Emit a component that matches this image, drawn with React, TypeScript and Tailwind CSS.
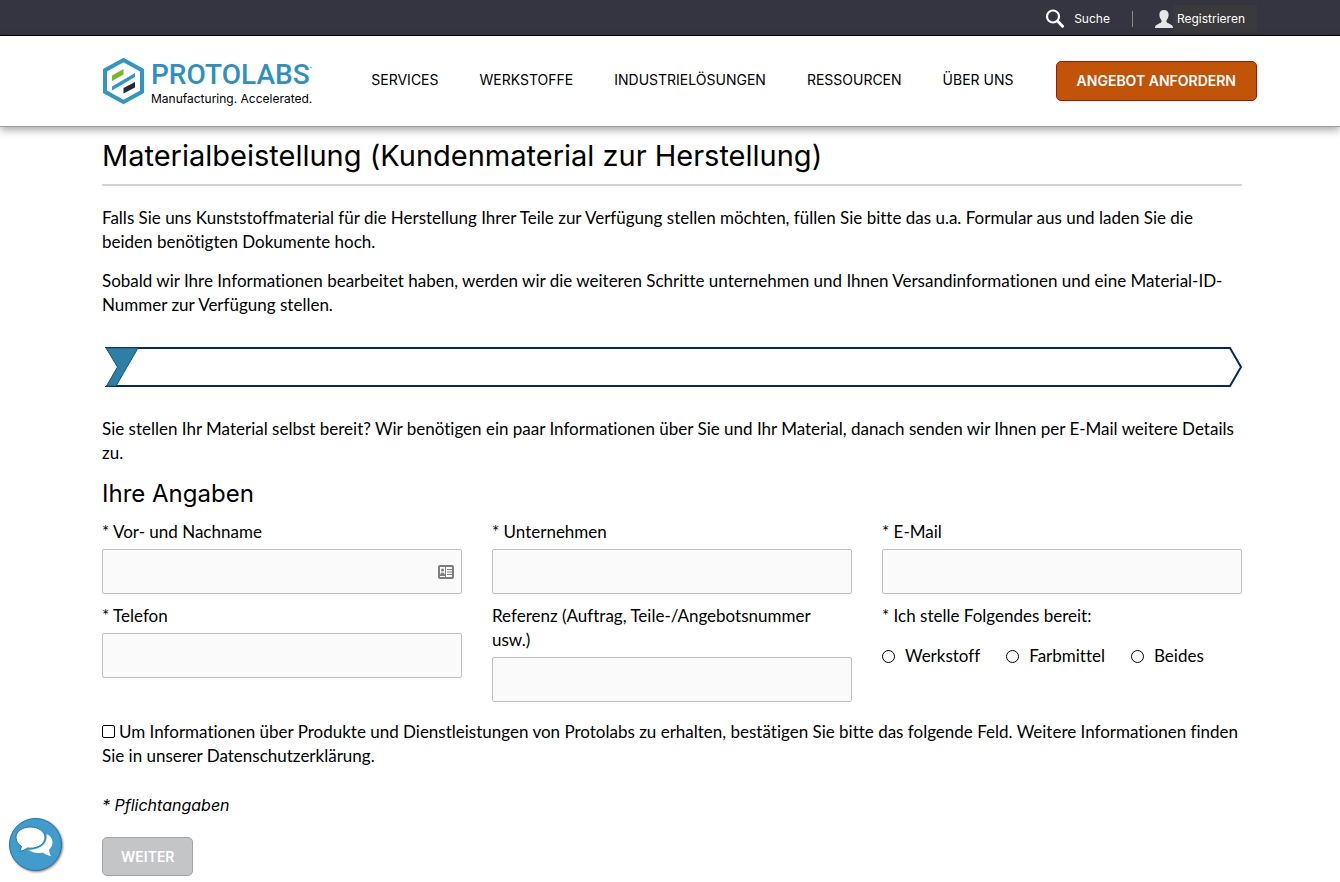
import React, { ReactNode } from 'react'

const navigation = [
  'Services',
  'Werkstoffe',
  'Industrielösungen',
  'Ressourcen',
  'Über uns',
]

const materials = ['Werkstoff', 'Farbmittel', 'Beides']

export default function App() {
  return (
    <div className="min-h-[882px] bg-white font-['Inter','Liberation_Sans',sans-serif] text-base text-black">
      <TopBar />
      <Header />
      <main className="pl-1 font-['Lato',sans-serif] text-[17px] leading-6 [font-variant-ligatures:none]">
        <div className="mx-auto max-w-[1140px] pb-1">
          <h1 className="border-b-2 border-[#d0d3d0] pt-2 pb-[7px] font-['Inter',sans-serif] text-[29px] leading-[42px]">
            Materialbeistellung (Kundenmaterial zur Herstellung)
          </h1>
          <p className="mt-5">
            Falls Sie uns Kunststoffmaterial für die Herstellung Ihrer Teile zur
            Verfügung stellen möchten, füllen Sie bitte das u.a. Formular aus
            und laden Sie die beiden benötigten Dokumente hoch.
          </p>
          <p className="mt-[15px]">
            Sobald wir Ihre Informationen bearbeitet haben, werden wir die
            weiteren Schritte unternehmen und Ihnen Versandinformationen und
            eine Material-ID-Nummer zur Verfügung stellen.
          </p>
          <Progress />
          <p>
            Sie stellen Ihr Material selbst bereit? Wir benötigen ein paar
            Informationen über Sie und Ihr Material, danach senden wir Ihnen per
            E-Mail weitere Details zu.
          </p>
          <MaterialForm />
        </div>
      </main>
      <button
        type="button"
        aria-label="Chat"
        className="fixed bottom-2.5 left-2 cursor-pointer"
      >
        <ChatIcon />
      </button>
    </div>
  )
}

function TopBar() {
  return (
    <div className="h-9 border-b border-black bg-[#343541] pl-1 text-xs text-white">
      <div className="mx-auto flex h-full max-w-[1170px] items-center justify-end pt-0.5">
        <a href="#suche" className="flex items-center gap-2.5">
          <SearchIcon />
          Suche
        </a>
        <span className="mx-[22px] h-4 w-px bg-[#8b8880]" />
        <a href="#registrieren" className="flex items-center">
          <UserIcon />
          <span className="bg-[#3a3a3c] py-1.5 pr-3 pl-1">Registrieren</span>
        </a>
      </div>
    </div>
  )
}

function Header() {
  return (
    <header className="relative h-[91px] border-b border-[#9a9d9d] bg-white pl-1 shadow-[0_3px_8px_rgba(0,0,0,0.35)]">
      <div className="mx-auto flex h-full max-w-[1170px] items-center pl-[15px]">
        <Logo />
        <nav className="ml-[59px] flex gap-[41px] pb-0.5 text-sm uppercase">
          {navigation.map((item) => (
            <a key={item} href="#" className="whitespace-nowrap">
              {item}
            </a>
          ))}
        </nav>
        <a
          href="#angebot"
          className="ml-auto flex h-10 items-center rounded-[5px] border border-[#a31408] bg-[#c2540a] px-5 text-sm font-semibold whitespace-nowrap text-white uppercase"
        >
          Angebot anfordern
        </a>
      </div>
    </header>
  )
}

function Logo() {
  return (
    <a href="#" className="flex items-center gap-1.5">
      <svg width="43" height="48" viewBox="0 0 43 48" aria-hidden="true">
        <path
          d="M21.500 3 40 13.200v21.600L21.500 45 3 34.800V13.200z"
          fill="none"
          stroke="#2e96c8"
          strokeWidth="4"
        />
        <path d="M10 18.500 21.500 12v5.500L10 24z" fill="#76b82a" />
        <path d="M10 29.500 33 16v4L10 33.500z" fill="#2e96c8" />
        <path d="M21.500 31 33 25v5.500L21.500 36.500z" fill="#252a36" />
      </svg>
      <span className="block pt-1">
        <span className="flex font-['Roboto',sans-serif] text-[28px] leading-8 font-medium text-[#2e8fc4]">
          PROTOLABS
          <span className="pt-1 text-[4px] leading-3">™</span>
        </span>
        <span className="block text-xs leading-4">
          Manufacturing. Accelerated.
        </span>
      </span>
    </a>
  )
}

function Progress() {
  return (
    <div
      role="progressbar"
      aria-label="Fortschritt"
      aria-valuenow={0}
      className="my-[30px] flex h-10 pl-[3px]"
    >
      <svg width="36" height="40" viewBox="0 0 36 40">
        <path d="M0 .5h36M0 39.500h36" stroke="#012a62" />
        <path d="M33 1.500h3M11 38.500h25" stroke="#012a62" />
        <path
          d="M1 1h32L11 39H1.500L12.500 20z"
          fill="#2e7fa6"
          stroke="#125387"
          strokeWidth="1"
        />
      </svg>
      <div className="flex-1 border-y-2 border-[#012a62]" />
      <svg width="13" height="40" viewBox="0 0 13 40">
        <path
          d="M0 1h1l11 19L1 39H0"
          fill="none"
          stroke="#012a62"
          strokeWidth="2"
        />
      </svg>
    </div>
  )
}

function MaterialForm() {
  return (
    <form onSubmit={(e) => e.preventDefault()}>
      <h2 className="mt-[11px] mb-2 font-['Inter',sans-serif] text-2xl leading-9">
        Ihre Angaben
      </h2>
      <div className="grid grid-cols-3 gap-x-[30px] gap-y-2.5">
        <Field id="name" label="* Vor- und Nachname">
          <ContactCardIcon />
        </Field>
        <Field id="company" label="* Unternehmen" />
        <Field id="email" label="* E-Mail" type="email" />
        <Field id="phone" label="* Telefon" type="tel" />
        <Field
          id="reference"
          label="Referenz (Auftrag, Teile-/Angebotsnummer usw.)"
        />
        <fieldset>
          <legend>* Ich stelle Folgendes bereit:</legend>
          <div className="mt-4 flex gap-[26px]">
            {materials.map((material) => (
              <label key={material} className="flex items-center gap-2.5">
                <input
                  type="radio"
                  name="material"
                  value={material}
                  className="size-[13px] appearance-none rounded-full border border-black bg-white checked:border-4"
                />
                {material}
              </label>
            ))}
          </div>
        </fieldset>
      </div>
      <label className="mt-[18px] block">
        <input
          type="checkbox"
          className="mr-1 size-[13px] appearance-none rounded-[2px] border border-black bg-white checked:bg-black"
        />
        Um Informationen über Produkte und Dienstleistungen von Protolabs zu
        erhalten, bestätigen Sie bitte das folgende Feld. Weitere Informationen
        finden Sie in unserer Datenschutzerklärung.
      </label>
      <p className="mt-[25px] font-['Inter',sans-serif] text-base italic">
        * Pflichtangaben
      </p>
      <button
        type="submit"
        className="mt-5 h-[39px] rounded-[5px] border border-[#a3a4a6] bg-[#c4c5c7] px-[18px] font-['Inter',sans-serif] text-sm font-semibold text-white"
      >
        WEITER
      </button>
    </form>
  )
}

type FieldProps = {
  id: string
  label: string
  type?: string
  children?: ReactNode
}

function Field({ id, label, type = 'text', children }: FieldProps) {
  return (
    <div>
      <label htmlFor={id} className="block pr-5">
        {label}
      </label>
      <div className="relative mt-[5px]">
        <input
          id={id}
          type={type}
          className="block h-[45px] w-full rounded-[2px] border border-[#bfc1c0] bg-[#fafafa] px-3"
        />
        {children}
      </div>
    </div>
  )
}

function SearchIcon() {
  return (
    <svg width="19" height="19" viewBox="0 0 19 19" fill="none" stroke="#fff">
      <circle cx="8" cy="7.500" r="6" strokeWidth="2.200" />
      <path d="m12.500 12 5 5.200" strokeWidth="3" strokeLinecap="round" />
    </svg>
  )
}

function UserIcon() {
  return (
    <svg width="18" height="18" viewBox="0 0 18 18" fill="#e6e6e6">
      <path d="M9 0c3 0 4.600 1.800 4.600 4.600 0 2-.5 3.600-1.400 4.700-.8 1-.9 1.500-.7 2.500.2.900 1.400 1.400 3.200 2.100 2.200.8 3.300 1.800 3.300 4.100H0c0-2.300 1.100-3.300 3.300-4.100 1.800-.7 3-1.200 3.200-2.100.2-1 .1-1.500-.7-2.500-.9-1.100-1.400-2.700-1.400-4.700C4.400 1.800 6 0 9 0z" />
    </svg>
  )
}

function ContactCardIcon() {
  return (
    <svg
      width="16"
      height="14"
      viewBox="0 0 16 14"
      className="pointer-events-none absolute top-4 right-2"
    >
      <rect
        x="1"
        y="1"
        width="14"
        height="12"
        rx="1"
        fill="#fafafa"
        stroke="#7d7d7d"
        strokeWidth="2"
      />
      <path d="M7.500 1v12M9 4.500h5M9 7h5M9 9.500h5" stroke="#7d7d7d" />
      <circle cx="4.500" cy="5" r="1.500" fill="#7d7d7d" />
      <path d="M2 11c0-2 1-3.500 2.500-3.500S7 9 7 11z" fill="#7d7d7d" />
    </svg>
  )
}

function ChatIcon() {
  return (
    <svg
      width="55"
      height="55"
      viewBox="0 0 55 55"
      className="drop-shadow-[1px_1px_1px_rgba(90,30,0,0.6)]"
    >
      <circle
        cx="27.500"
        cy="27.500"
        r="26"
        fill="#429ccb"
        stroke="#1976b5"
        strokeWidth="1"
      />
      <path
        d="M38.500 17c4 1.500 6 5 6 8.500 0 3-1.500 5.500-3.500 7.300.2 2.200.8 4.200 1.800 6.200-3.200-.4-6-1.900-8-3.500-5.500 1.300-10.500.3-14-2.500C31 32.500 40 28 38.500 17z"
        fill="#fff"
      />
      <path
        d="M22.500 10c8.300 0 14.500 4.700 14.500 10.500s-6.200 10.700-14.500 10.700c-1 0-2-.1-3-.2-2 1.600-4.300 2.800-8.200 3.300 1.500-1.700 2-3.500 2.100-5C10 27.300 8 24.200 8 20.500 8 14.700 14.200 10 22.500 10z"
        fill="#fff"
        stroke="#1976b5"
        strokeWidth="1"
      />
    </svg>
  )
}
